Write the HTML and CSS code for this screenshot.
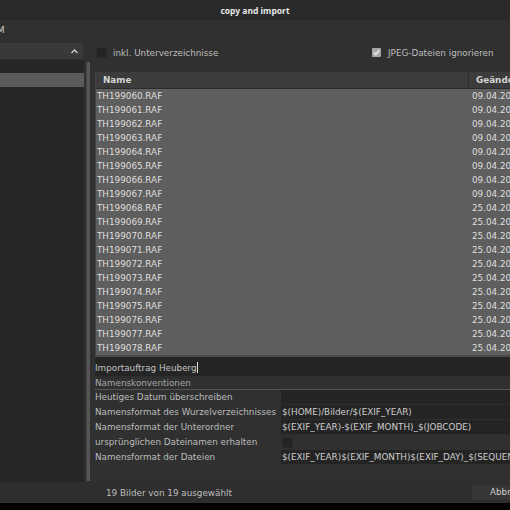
FILE: index.html
```html
<!DOCTYPE html>
<html>
  <head>
    <title>copy and import</title>
    <link rel="stylesheet" href="styles.css">
  </head>
  <body>
    <div id="dialog">
      <div class="titlebar">copy and import</div>
      <div class="main">
        <div class="side">
          <div class="side-label">M</div>
          <div class="combo">
            <svg width="7" height="5" viewBox="0 0 7 5"><path d="M0.5 4 L3.5 1 L6.5 4" fill="none" stroke="#cfcfcf" stroke-width="1.3"/></svg>
          </div>
          <div class="tree">
            <div class="tree-list">
              <div class="tree-row"></div>
              <div class="tree-row selected"></div>
            </div>
            <div class="scrollbar"><div class="thumb"></div></div>
          </div>
        </div>
        <div class="content">
          <div class="options">
            <label class="check subdirs"><span class="box"></span>inkl. Unterverzeichnisse</label>
            <label class="check">
              <svg class="box-on" width="9" height="9" viewBox="0 0 9 9"><rect width="9" height="9" rx="1" fill="#a8a8a8"/><path d="M1.8 4.6 L3.7 6.5 L7.3 2.4" fill="none" stroke="#efefef" stroke-width="1.5"/></svg>
              JPEG-Dateien ignorieren
            </label>
          </div>
          <div class="files">
            <div class="files-head">
              <div class="col-name">Name</div>
              <div class="col-date">Geändert</div>
            </div>
            <div class="files-body">
              <div class="file"><span class="col-name">TH199060.RAF</span><span class="col-date">09.04.2017</span></div>
              <div class="file"><span class="col-name">TH199061.RAF</span><span class="col-date">09.04.2017</span></div>
              <div class="file"><span class="col-name">TH199062.RAF</span><span class="col-date">09.04.2017</span></div>
              <div class="file"><span class="col-name">TH199063.RAF</span><span class="col-date">09.04.2017</span></div>
              <div class="file"><span class="col-name">TH199064.RAF</span><span class="col-date">09.04.2017</span></div>
              <div class="file"><span class="col-name">TH199065.RAF</span><span class="col-date">09.04.2017</span></div>
              <div class="file"><span class="col-name">TH199066.RAF</span><span class="col-date">09.04.2017</span></div>
              <div class="file"><span class="col-name">TH199067.RAF</span><span class="col-date">09.04.2017</span></div>
              <div class="file"><span class="col-name">TH199068.RAF</span><span class="col-date">25.04.2017</span></div>
              <div class="file"><span class="col-name">TH199069.RAF</span><span class="col-date">25.04.2017</span></div>
              <div class="file"><span class="col-name">TH199070.RAF</span><span class="col-date">25.04.2017</span></div>
              <div class="file"><span class="col-name">TH199071.RAF</span><span class="col-date">25.04.2017</span></div>
              <div class="file"><span class="col-name">TH199072.RAF</span><span class="col-date">25.04.2017</span></div>
              <div class="file"><span class="col-name">TH199073.RAF</span><span class="col-date">25.04.2017</span></div>
              <div class="file"><span class="col-name">TH199074.RAF</span><span class="col-date">25.04.2017</span></div>
              <div class="file"><span class="col-name">TH199075.RAF</span><span class="col-date">25.04.2017</span></div>
              <div class="file"><span class="col-name">TH199076.RAF</span><span class="col-date">25.04.2017</span></div>
              <div class="file"><span class="col-name">TH199077.RAF</span><span class="col-date">25.04.2017</span></div>
              <div class="file"><span class="col-name">TH199078.RAF</span><span class="col-date">25.04.2017</span></div>
            </div>
          </div>
          <div class="jobcode">Importauftrag Heuberg<span class="cursor"></span></div>
          <div class="section">Namenskonventionen</div>
          <div class="naming">
            <div class="label">Heutiges Datum überschreiben</div>
            <div class="entry"></div>
            <div class="label">Namensformat des Wurzelverzeichnisses</div>
            <div class="entry">$(HOME)/Bilder/$(EXIF_YEAR)</div>
            <div class="label">Namensformat der Unterordner</div>
            <div class="entry">$(EXIF_YEAR)-$(EXIF_MONTH)_$(JOBCODE)</div>
            <div class="label">ursprünglichen Dateinamen erhalten</div>
            <div class="flag"><span class="box"></span></div>
            <div class="label">Namensformat der Dateien</div>
            <div class="entry">$(EXIF_YEAR)$(EXIF_MONTH)$(EXIF_DAY)_$(SEQUENCE).$(FILE_EXTENSION)</div>
          </div>
        </div>
      </div>
      <div class="footer">
        <span class="status">19 Bilder von 19 ausgewählt</span>
        <span class="button">Abbrechen</span>
      </div>
    </div>
  </body>
</html>
```

FILE: styles.css
```css
body {
  margin: 0;
  background: #000;
  font-family: "DejaVu Sans", "Noto Sans", sans-serif;
  font-size: 8.8px;
  color: #bdbdbd;
}

#dialog {
  width: 510px;
  height: 510px;
  overflow: hidden;
  background: #000;
}

.titlebar {
  height: 20px;
  line-height: 21px;
  background: #2a2a2a;
  color: #e6e6e6;
  font-family: "Noto Sans", sans-serif;
  font-size: 8.5px;
  font-weight: bold;
  text-align: center;
}

.main {
  display: flex;
  height: 462px;
  background: #303030;
}

.side {
  width: 91px;
  flex: none;
  display: flex;
  flex-direction: column;
}

.side-label {
  height: 23px;
  line-height: 21px;
  margin-left: -3px;
  color: #cfcfcf;
}

.combo {
  width: 83px;
  height: 16px;
  box-sizing: border-box;
  background: #393939;
  display: flex;
  align-items: center;
  justify-content: flex-end;
  padding-right: 5px;
}

.tree {
  flex: 1;
  display: flex;
  margin-top: 1px;
}

.tree-list {
  width: 84px;
  background: #272727;
}

.tree-row {
  height: 13px;
}

.tree-row.selected {
  height: 14px;
  background: #5a5a5a;
}

.scrollbar {
  width: 7px;
  padding: 2px 1px 1px 2px;
  box-sizing: border-box;
}

.thumb {
  height: 100%;
  background: #555;
  border-left: 1px solid #474747;
}

.content {
  flex: 1;
  min-width: 0;
  padding: 23px 0 0 4px;
  display: flex;
  flex-direction: column;
}

.options {
  height: 19px;
  display: flex;
  align-items: center;
  padding-left: 1px;
}

.check {
  display: flex;
  align-items: center;
  gap: 7px;
}

.check.subdirs {
  width: 276px;
  gap: 6px;
}

.box {
  width: 9px;
  height: 9px;
  background: #242424;
  border: 1px solid #2c2c2c;
  border-radius: 1px;
}

.files {
  margin-top: 10px;
  width: 460px;
  border-left: 1px solid #444;
  border-bottom: 2px solid #4c4c4c;
}

.files-head {
  display: flex;
  height: 16px;
  line-height: 16px;
  background: #3c3c3c;
  font-weight: bold;
  color: #d4d4d4;
  border-bottom: 1px solid #2c2c2c;
}

.files-head .col-name {
  width: 365px;
  padding-left: 7px;
  border-right: 1px solid #2b2b2b;
}

.files-head .col-date {
  padding-left: 7px;
}

.files-body {
  background: #5e5e5e;
}

.file {
  display: flex;
  height: 14px;
  line-height: 14px;
  color: #dedede;
}

.file .col-name {
  width: 375px;
  padding-left: 1px;
}

.jobcode {
  height: 19px;
  line-height: 22px;
  background: #252525;
  color: #c4c4c4;
  border-bottom: 2px solid #2e2e2e;
}

.cursor {
  display: inline-block;
  width: 1px;
  height: 11px;
  background: #ddd;
  vertical-align: -2px;
}

.section {
  height: 11px;
  line-height: 10px;
  color: #a6a6a6;
  border-bottom: 1px solid #555;
}

.naming {
  display: grid;
  grid-template-columns: 186px 1fr;
  grid-auto-rows: 15px;
  line-height: 15px;
  white-space: nowrap;
}

.label {
  color: #bcbcbc;
}

.entry {
  background: #242424;
  border-bottom: 1px solid #2e2e2e;
  line-height: 14px;
  padding-left: 1px;
  overflow: hidden;
  color: #cdcdcd;
}

.flag {
  display: flex;
  align-items: center;
  padding-left: 1px;
}

.footer {
  height: 21px;
  background: #2e2e2e;
  display: flex;
  align-items: center;
  justify-content: space-between;
}

.status {
  margin-left: 106px;
}

.button {
  width: 52px;
  margin-right: -32px;
  height: 15px;
  line-height: 15px;
  background: #363636;
  border-radius: 2px;
  padding-left: 18px;
  color: #cfcfcf;
}
```
